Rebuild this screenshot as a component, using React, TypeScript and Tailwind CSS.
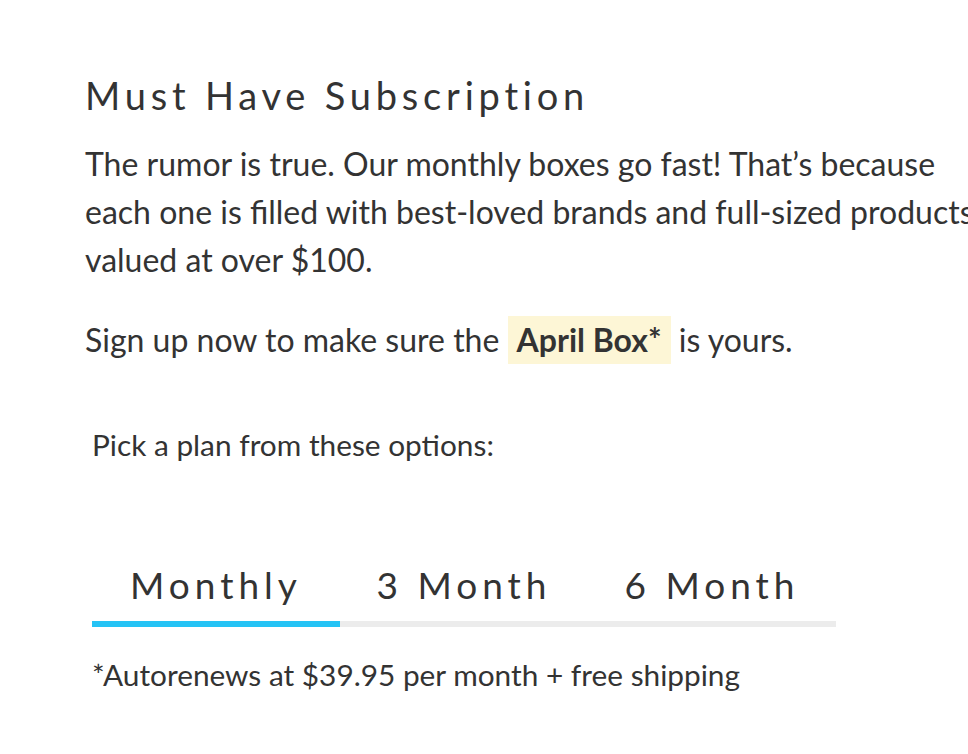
const tabs = ["Monthly", "3 Month", "6 Month"];

export default function App() {
  return (
    <div className="min-h-[754px] overflow-hidden bg-white font-['Lato',sans-serif] text-[#333333]">
      <div className="pl-[85px] pt-[72px]">
        <h1 className="text-[38px] leading-[46px] tracking-[4.8px] font-normal">Must Have Subscription</h1>
        <p className="mt-[22px] whitespace-nowrap text-[32px] leading-[48px]">
          The rumor is true. Our monthly boxes go fast! That’s because
          <br />
          each one is filled with best-loved brands and full-sized products
          <br />
          valued at over $100.
        </p>
        <p className="mt-[32px] text-[32px] leading-[48px]">
          Sign up now to make sure the{" "}
          <span className="inline-block bg-[#fdf6d6] px-[9px] font-bold">April Box*</span> is yours.
        </p>
        <div className="pl-[7px]">
          <p className="mt-[57px] text-[29.8px] leading-[48px]">Pick a plan from these options:</p>
          <div className="mt-[93px] flex w-[744px]">
            {tabs.map((t, i) => (
              <div
                key={t}
                className={
                  "flex-1 pb-[13px] text-center text-[37px] leading-[46px] tracking-[5px] border-b-[6px] " +
                  (i === 0 ? "border-[#25c3f5]" : "border-[#ececec]")
                }
              >
                {t}
              </div>
            ))}
          </div>
          <p className="mt-[24px] text-[29.8px] leading-[48px]">*Autorenews at $39.95 per month + free shipping</p>
        </div>
      </div>
    </div>
  );
}
